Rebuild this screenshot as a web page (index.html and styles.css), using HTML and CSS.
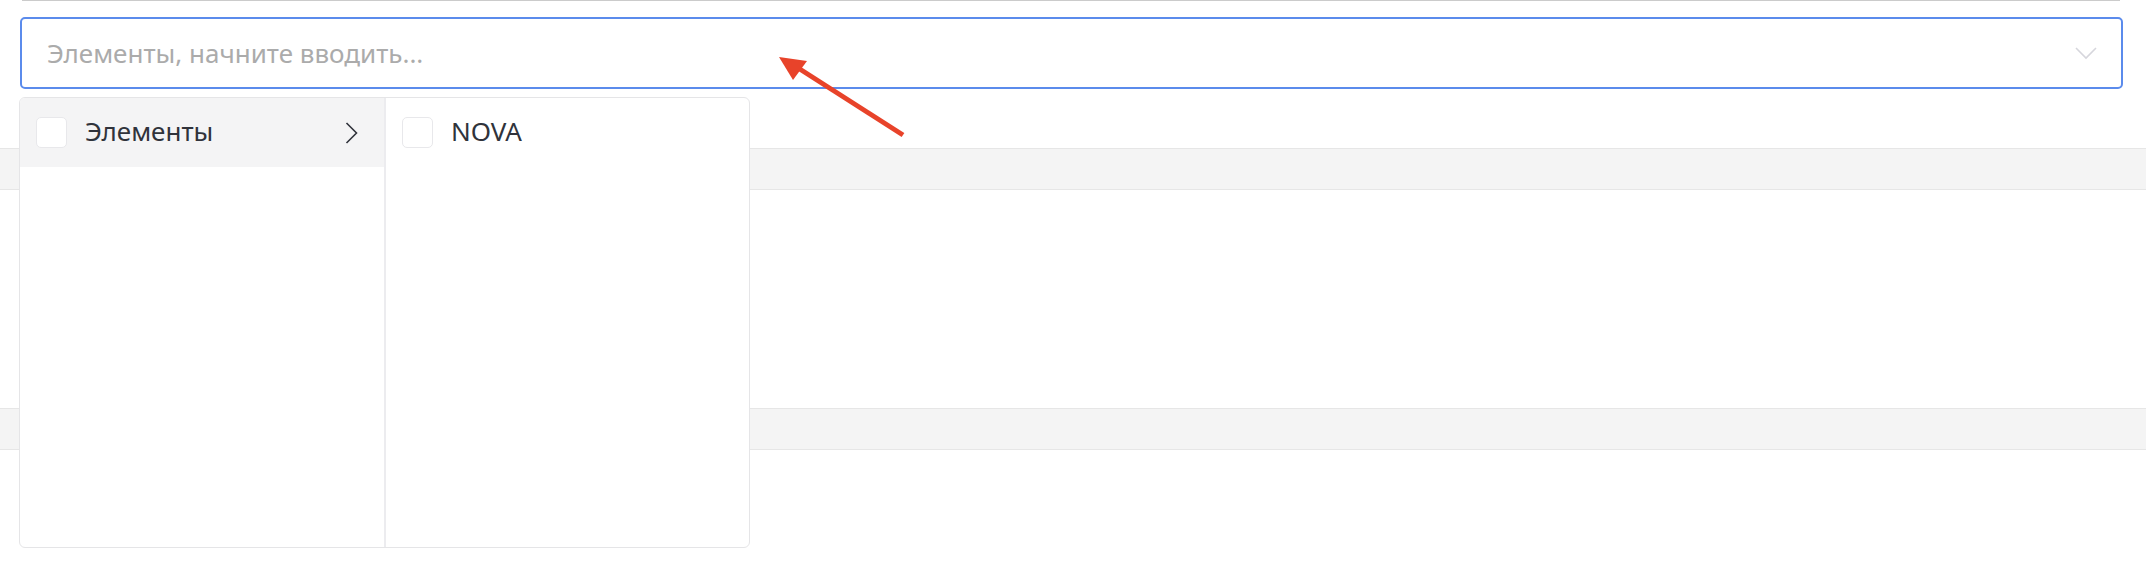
FILE: index.html
```html
<!DOCTYPE html>
<html lang="ru">
<head>
<meta charset="utf-8">
<title>Select</title>
<link rel="stylesheet" href="styles.css">
</head>
<body>
<div class="stage">
  <div class="top-rule"></div>
  <div class="select">
    <span class="placeholder">Элементы, начните вводить...</span>
    <svg class="select-caret" width="22" height="13" viewBox="0 0 22 13"><path d="M1 1 L11 11 L21 1" fill="none" stroke="#d6d6dc" stroke-width="1.6"/></svg>
  </div>
  <div class="band band-first"></div>
  <div class="band band-second"></div>

  <div class="menu">
    <div class="menu-col menu-col-left">
      <div class="menu-row is-active">
        <span class="check"></span>
        <span class="label">Элементы</span>
        <svg class="row-caret" width="13" height="22" viewBox="0 0 13 22"><path d="M1.5 1 L11.5 11 L1.5 21" fill="none" stroke="#30333b" stroke-width="1.6"/></svg>
      </div>
    </div>
    <div class="menu-col">
      <div class="menu-row">
        <span class="check"></span>
        <span class="label">NOVA</span>
      </div>
    </div>
  </div>

  <svg class="pointer" width="140" height="100" viewBox="770 45 140 100">
    <line x1="903" y1="135" x2="795" y2="66" stroke="#e8432a" stroke-width="5" stroke-linecap="butt"/>
    <polygon points="779,57 807,61 793,80" fill="#e8432a"/>
  </svg>
</div>
</body>
</html>
```
FILE: styles.css
```css
* { box-sizing: border-box; }
html, body { margin: 0; padding: 0; background: #ffffff; }
body { font-family: "Noto Sans", "Open Sans", sans-serif; }

.stage {
  position: relative;
  width: 2146px;
  height: 564px;
  overflow: hidden;
}

.top-rule {
  height: 1px;
  margin: 0 26px 0 22px;
  background: #cbcbcb;
}

.select {
  display: flex;
  align-items: center;
  justify-content: space-between;
  height: 72px;
  margin: 16px 23px 0 20px;
  padding: 0 24px 0 24px;
  border: 2px solid #5b8bec;
  border-radius: 5px;
  background: #ffffff;
}

.placeholder {
  font-size: 26px;
  color: #ababab;
  line-height: 1;
  padding-left: 1px;
}

.select-caret { display: block; }

.band {
  height: 42px;
  background: #f4f4f4;
  border-top: 1px solid #e6e6e6;
  border-bottom: 1px solid #e6e6e6;
}
.band-first { margin-top: 59px; }
.band-second { margin-top: 218px; }

.menu {
  position: absolute;
  left: 19px;
  top: 97px;
  width: 731px;
  height: 451px;
  display: grid;
  grid-template-columns: 366px 1fr;
  border: 1.5px solid #e5e5e7;
  border-radius: 6px;
  background: #ffffff;
  overflow: hidden;
}

.menu-col-left { border-right: 2px solid #ececef; }

.menu-row {
  display: flex;
  align-items: center;
  height: 69px;
  padding: 0 0 0 16px;
}
.menu-col-left .menu-row { padding-right: 26px; }
.menu-row.is-active { background: #f4f4f5; }

.check {
  flex: none;
  width: 31px;
  height: 31px;
  border: 1.5px solid #e8e8eb;
  border-radius: 5px;
  background: #ffffff;
  margin-right: 18px;
}

.label {
  flex: 1;
  font-size: 26px;
  color: #30333b;
  line-height: 1;
  padding-bottom: 3px;
}

.row-caret { display: block; flex: none; }

.pointer {
  position: absolute;
  left: 770px;
  top: 45px;
}
```
